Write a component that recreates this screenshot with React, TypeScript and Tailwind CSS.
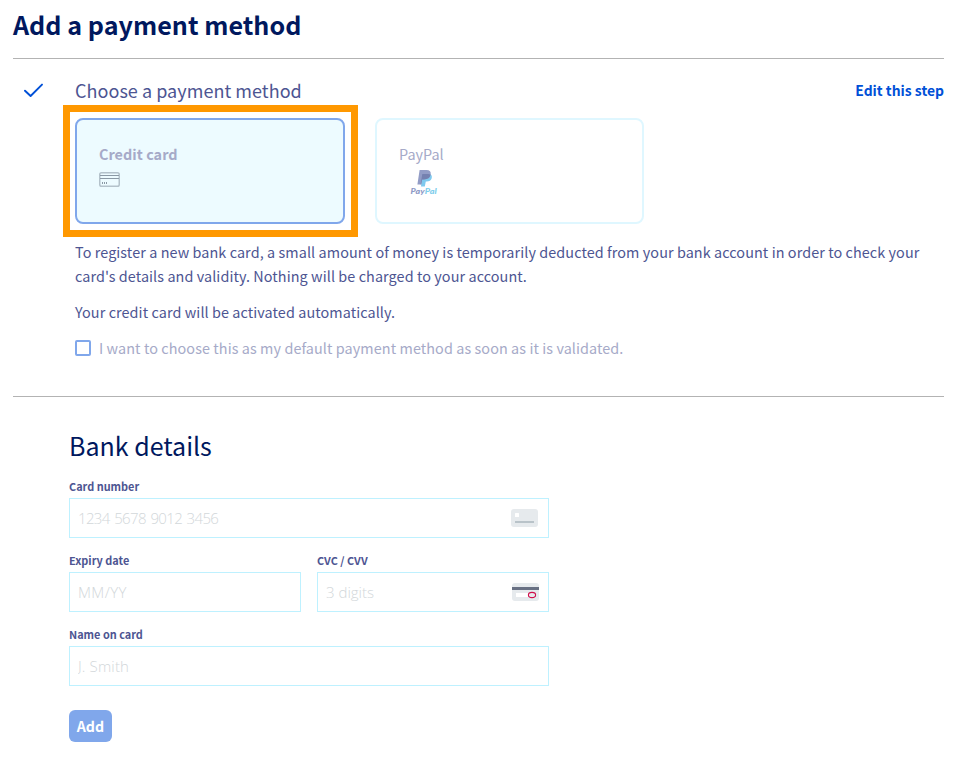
import type { ReactNode } from "react";

function CheckMark() {
  return (
    <svg className="mt-[23px] ml-[11px] h-[16px] w-[20px]" viewBox="0 0 20 16" fill="none">
      <path d="M1 8.7 L6.6 14 L18 2.6" stroke="#0050d7" strokeWidth="1.9" strokeLinecap="round" strokeLinejoin="round" />
    </svg>
  );
}

function CreditCardIcon() {
  return (
    <svg className="mt-[6px] block h-[15px] w-[21px]" viewBox="0 0 21 15" fill="none">
      <rect x="0.75" y="0.75" width="19.5" height="13.5" rx="1.8" stroke="#b4c2cb" strokeWidth="1.5" />
      <path d="M1 3.5H20M1 6.5H20" stroke="#8b99a5" />
      <path d="M3.5 10V12M5.5 10V12M7.5 10V12" stroke="#8b99a5" />
    </svg>
  );
}

function PayPalLogo() {
  return (
    <svg className="mt-[2px] ml-[11px] block h-[28px] w-[28px]" viewBox="0 0 28 28">
      <path d="M12.2 5.5H19.3Q22.6 7 21.7 10.2Q20.7 13.5 16.5 13.5H15.8L14.8 18.4H11Z" fill="#7fcaef" />
      <path d="M9.6 2H16.4Q21.6 2 20.6 6.8Q19.6 11.4 13.9 11.4H12.1L11.2 16.4H7.4Z" fill="#929cc6" />
      <path d="M12.3 6H18.2Q19.7 6 20.5 6.8Q19.6 11.4 13.9 11.4H12.1L11.2 16.4H10.6Z" fill="#7581b0" />
      <text x="0.6" y="26.4" fontFamily="Lato, sans-serif" fontSize="8" fontWeight="900" fontStyle="italic" letterSpacing="0" textLength="14" lengthAdjust="spacingAndGlyphs" fill="#8e9ac6">Pay</text>
      <text x="14.8" y="26.4" fontFamily="Lato, sans-serif" fontSize="8" fontWeight="900" fontStyle="italic" letterSpacing="0" textLength="12" lengthAdjust="spacingAndGlyphs" fill="#80ceec">Pal</text>
    </svg>
  );
}

function CardFrontIcon() {
  return (
    <svg className="h-[18px] w-[27px]" viewBox="0 0 27 18">
      <rect width="27" height="18" rx="3" fill="#e6eaed" />
      <rect x="4" y="4" width="4" height="4" rx="0.5" fill="#fff" />
      <rect x="4" y="12" width="19" height="2" fill="#b9c3c9" />
    </svg>
  );
}

function CardBackIcon() {
  return (
    <svg className="h-[18px] w-[27px]" viewBox="0 0 27 18">
      <rect width="27" height="18" rx="3" fill="#e6eaed" />
      <rect y="4" width="27" height="3" fill="#687083" />
      <rect x="4" y="10" width="17" height="4" fill="#fff" />
      <ellipse cx="20" cy="12" rx="3.6" ry="2.6" fill="#e6eaed" stroke="#d0104c" strokeWidth="1.1" />
    </svg>
  );
}

type FieldProps = { label: string; placeholder: string; children?: ReactNode; className?: string; inputClassName?: string };

function Field({ label, placeholder, children, className = "", inputClassName = "tracking-[0.15px]" }: FieldProps) {
  return (
    <label className={`block min-w-0 ${className}`}>
      <span className="block h-[22px] text-[10.9px] leading-[20px] font-bold tracking-normal text-[#4d5592]">{label}</span>
      <span className="flex h-10 items-center border border-[#bef1ff] px-2">
        <input
          className={`min-w-0 flex-1 font-['Open_Sans',sans-serif] text-[15px] font-light text-[#4d5592] outline-none placeholder:text-[#d2d7da] ${inputClassName}`}
          placeholder={placeholder}
        />
        {children}
      </span>
    </label>
  );
}

export default function App() {
  return (
    <main className="h-[778px] w-[966px] overflow-hidden bg-white pr-[22px] pl-[13px] font-['Noto_Sans_CJK_SC',sans-serif] text-[14.4px] leading-6 tracking-[0.08px] text-[#4d5592]">
      <h1 className="h-[58px] pt-[4px] text-[25.1px] leading-[40px] font-bold tracking-[0.03px] whitespace-nowrap text-[#00185e]">Add a payment method</h1>

      <section className="flex h-[338px] border-t border-[#b3b3b3]">
        <div className="w-[62px] shrink-0">
          <CheckMark />
        </div>
        <div className="flex-1">
          <header className="flex h-[59px] items-center justify-between pt-[2px]">
            <h2 className="text-[18px] leading-6 tracking-[0.04px] whitespace-nowrap">Choose a payment method</h2>
            <a className="text-[13.9px] font-bold tracking-normal whitespace-nowrap text-[#0050d7]">Edit this step</a>
          </header>
          <div className="flex gap-[30px]">
            <div className="relative h-[106px] w-[270px] rounded-[8px] border-2 border-[#80a7eb] bg-[#edfbff] px-[22px] pt-[22px]">
              <div className="font-bold tracking-[0.04px] text-[#a6aac8]">Credit card</div>
              <CreditCardIcon />
              <div className="pointer-events-none absolute -top-[15px] -left-[14px] h-[132px] w-[295px] border-[7px] border-[#ff9800]" />
            </div>
            <div className="h-[106px] w-[269px] rounded-[8px] border-2 border-[#dff7ff] px-[22px] pt-[22px]">
              <div className="tracking-normal text-[#a6aac8]">PayPal</div>
              <PayPalLogo />
            </div>
          </div>
          <p className="mt-[16px] whitespace-nowrap">
            To register a new bank card, a small amount of money is temporarily deducted from your bank account in order to check your
            <br />
            card's details and validity. Nothing will be charged to your account.
          </p>
          <p className="mt-3">Your credit card will be activated automatically.</p>
          <div className="mt-3 flex items-center gap-2 text-[#a6aac8]">
            <span className="h-4 w-4 rounded-[2px] border-2 border-[#80a7eb]" />
            <span>I want to choose this as my default payment method as soon as it is validated.</span>
          </div>
        </div>
      </section>

      <section className="border-t border-[#b3b3b3] pt-[28px] pl-[56px]">
        <h2 className="h-[51px] text-[25px] leading-[40px] tracking-normal text-[#00185e]">Bank details</h2>
        <form className="flex w-[480px] flex-col gap-3">
          <Field label="Card number" placeholder="1234 5678 9012 3456" inputClassName="tracking-[-0.65px] [word-spacing:1.3px]">
            <span className="mr-[2px]"><CardFrontIcon /></span>
          </Field>
          <div className="flex gap-4">
            <Field label="Expiry date" placeholder="MM/YY" className="flex-1" inputClassName="tracking-[0.4px]" />
            <Field label="CVC / CVV" placeholder="3 digits" className="flex-1" inputClassName="tracking-normal">
              <span className="mr-[1px]"><CardBackIcon /></span>
            </Field>
          </div>
          <Field label="Name on card" placeholder="J. Smith" />
          <button type="button" className="mt-3 h-8 w-[43px] rounded-[6px] bg-[#80a7eb] text-[14.2px] font-bold text-white">Add</button>
        </form>
      </section>
    </main>
  );
}
